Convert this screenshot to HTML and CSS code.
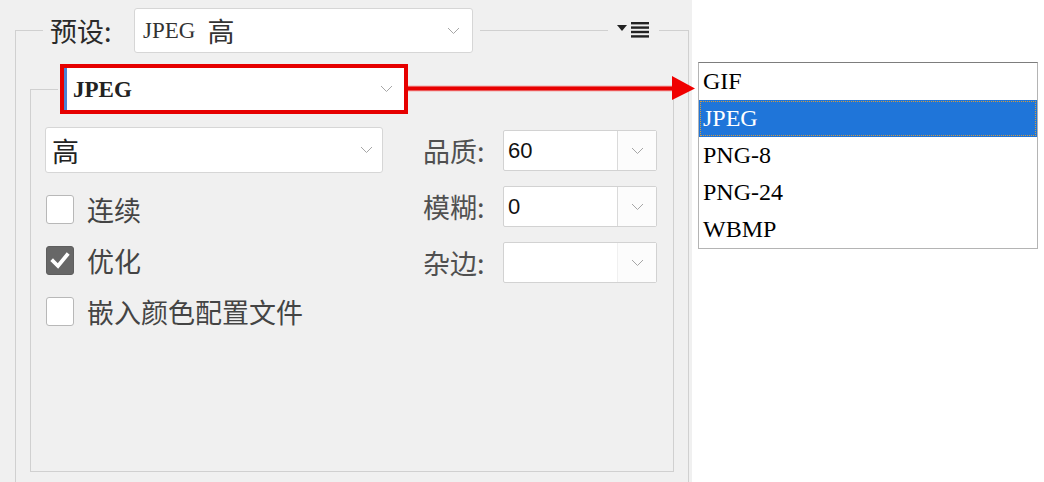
FILE: index.html
```html
<!DOCTYPE html>
<html lang="zh-CN">
<head>
<meta charset="utf-8">
<title>存储为 Web 所用格式</title>
<link rel="stylesheet" href="styles.css">
</head>
<body>
<div class="stage">
  <div class="panel">
    <fieldset class="group outer">
      <legend class="preset-legend">
        <span class="label preset-label">预设:</span>
        <div class="select preset-select">
          <span class="value"><span class="serif">JPEG</span> <span class="cjk">高</span></span>
          <svg class="chev" width="13" height="8" viewBox="0 0 13 8"><polyline points="1,1 6.5,6.5 12,1" fill="none" stroke="#a6a6a6" stroke-width="1"/></svg>
        </div>
        <span class="rule"></span>
        <svg class="menu-icon" width="32" height="16" viewBox="0 0 32 16">
          <polygon points="0,3 10,3 5,9" fill="#222"/>
          <rect x="14" y="0" width="18" height="2.4" fill="#222"/>
          <rect x="14" y="4.4" width="18" height="2.4" fill="#222"/>
          <rect x="14" y="8.8" width="18" height="2.4" fill="#222"/>
          <rect x="14" y="13.2" width="18" height="2.4" fill="#222"/>
        </svg>
      </legend>

      <fieldset class="group inner">
        <legend class="format-legend">
          <div class="select format-select">
            <span class="value serif bold">JPEG</span>
            <svg class="chev" width="13" height="8" viewBox="0 0 13 8"><polyline points="1,1 6.5,6.5 12,1" fill="none" stroke="#a6a6a6" stroke-width="1"/></svg>
          </div>
        </legend>

        <div class="cols">
          <div class="left">
            <div class="select quality-select">
              <span class="value cjk">高</span>
              <svg class="chev" width="13" height="8" viewBox="0 0 13 8"><polyline points="1,1 6.5,6.5 12,1" fill="none" stroke="#a6a6a6" stroke-width="1"/></svg>
            </div>
            <div class="check">
              <span class="box"></span>
              <span class="label">连续</span>
            </div>
            <div class="check">
              <span class="box checked">
                <svg width="28" height="29" viewBox="0 0 28 29"><polyline points="7,15 12,20 21,9" fill="none" stroke="#fff" stroke-width="3.8" stroke-linecap="square"/></svg>
              </span>
              <span class="label">优化</span>
            </div>
            <div class="check">
              <span class="box"></span>
              <span class="label">嵌入颜色配置文件</span>
            </div>
          </div>

          <div class="right">
            <div class="field">
              <span class="label field-label">品质:</span>
              <div class="combo">
                <span class="combo-value">60</span>
                <span class="combo-btn"><svg class="chev" width="13" height="8" viewBox="0 0 13 8"><polyline points="1,1 6.5,6.5 12,1" fill="none" stroke="#a6a6a6" stroke-width="1"/></svg></span>
              </div>
            </div>
            <div class="field">
              <span class="label field-label">模糊:</span>
              <div class="combo">
                <span class="combo-value">0</span>
                <span class="combo-btn"><svg class="chev" width="13" height="8" viewBox="0 0 13 8"><polyline points="1,1 6.5,6.5 12,1" fill="none" stroke="#a6a6a6" stroke-width="1"/></svg></span>
              </div>
            </div>
            <div class="field">
              <span class="label field-label">杂边:</span>
              <div class="combo">
                <span class="combo-value"></span>
                <span class="combo-btn faint"><svg class="chev" width="13" height="8" viewBox="0 0 13 8"><polyline points="1,1 6.5,6.5 12,1" fill="none" stroke="#a6a6a6" stroke-width="1"/></svg></span>
              </div>
            </div>
          </div>
        </div>
      </fieldset>
    </fieldset>
  </div>

  <svg class="arrow" width="288" height="26" viewBox="0 0 288 26">
    <line x1="0" y1="13.5" x2="268" y2="13.5" stroke="#f0b0b0" stroke-width="6"/>
    <line x1="0" y1="13.5" x2="268" y2="13.5" stroke="#e80000" stroke-width="4"/>
    <polygon points="264,1 287,13.5 264,25" fill="#f00000"/>
  </svg>

  <ul class="list">
    <li>GIF</li>
    <li class="sel">JPEG</li>
    <li>PNG-8</li>
    <li>PNG-24</li>
    <li>WBMP</li>
  </ul>
</div>
</body>
</html>
```

FILE: styles.css
```css
body {
  margin: 0;
  background: #fff;
  font-family: "Noto Sans CJK SC", sans-serif;
}

.stage {
  position: relative;
  width: 1044px;
  height: 482px;
  overflow: hidden;
  background: #fff;
}

.panel {
  width: 692px;
  height: 482px;
  box-sizing: border-box;
  padding-top: 8px;
  background: #f0f0f0;
  overflow: hidden;
}

.group {
  box-sizing: border-box;
  border: 1px solid #d0d0d0;
  min-width: 0;
  background: transparent;
}

.outer {
  margin: 0 0 0 15px;
  padding: 11px 0 0 0;
  width: 674px;
  height: 620px;
}

.inner {
  margin: 0 0 0 14px;
  padding: 13px 0 0 0;
  width: 644px;
  height: 408px;
}

.preset-legend {
  margin-left: 27px;
  padding: 0 10px 0 7px;
  width: 616px;
  box-sizing: border-box;
  display: flex;
  align-items: center;
}

.format-legend {
  margin-left: 27px;
  padding: 0 2px;
}

.label {
  font-family: "Noto Sans CJK SC", sans-serif;
  font-size: 27px;
  line-height: 1;
  color: #444;
  white-space: nowrap;
}

.preset-label {
  width: 84px;
  color: #2a2a2a;
}

.serif {
  font-family: "Liberation Serif", "Times New Roman", serif;
  font-size: 23px;
}

.bold {
  font-weight: 700;
  font-size: 23px;
}

.cjk {
  font-family: "Noto Sans CJK SC", sans-serif;
  font-size: 27px;
}

.select {
  box-sizing: border-box;
  display: flex;
  align-items: center;
  justify-content: space-between;
  background: #fff;
  border: 1px solid #d6d6d6;
  border-radius: 3px;
}

.select .value {
  line-height: 1;
  color: #333;
  white-space: nowrap;
}

.preset-select {
  width: 339px;
  height: 45px;
  padding: 0 12px 0 8px;
}

.preset-select .value {
  display: flex;
  align-items: center;
  gap: 12px;
}

.format-select {
  width: 348px;
  height: 50px;
  border: 4px solid #e60000;
  border-radius: 0;
  box-shadow: inset 3px 0 0 #4a82d4;
  padding: 0 11px 0 9px;
}

.format-select .value {
  color: #222;
}

.quality-select {
  width: 338px;
  height: 46px;
  padding: 0 9px 0 6px;
}

.quality-select .value {
  color: #222;
}

.rule {
  width: 128px;
  margin: 0 9px 0 7px;
  border-top: 1px solid #d0d0d0;
}

.menu-icon {
  display: block;
  margin-top: -2px;
}

.chev {
  display: block;
  flex: none;
}

.cols {
  display: flex;
  margin-left: 14px;
}

.left {
  width: 338px;
  display: flex;
  flex-direction: column;
  gap: 21px;
}

.check {
  display: flex;
  align-items: center;
  gap: 13px;
  height: 30px;
  padding-left: 1px;
}

.box {
  width: 28px;
  height: 29px;
  box-sizing: border-box;
  border: 1px solid #b8b8b8;
  border-radius: 3px;
  background: #fff;
  flex: none;
}

.box.checked {
  background: #676767;
  border-color: #5e5e5e;
}

.box.checked svg {
  display: block;
  margin: -1px;
}

.right {
  margin-left: 40px;
  padding-top: 3px;
  display: flex;
  flex-direction: column;
  gap: 15px;
}

.field {
  display: flex;
  align-items: center;
}

.field-label {
  width: 80px;
  color: #505050;
}

.combo {
  width: 154px;
  height: 41px;
  box-sizing: border-box;
  border: 1px solid #d2d2d2;
  border-radius: 2px;
  background: #fff;
  display: flex;
}

.combo-value {
  flex: 1;
  display: flex;
  align-items: center;
  padding-left: 4px;
  font-family: "Liberation Sans", Arial, sans-serif;
  font-size: 22px;
  color: #111;
}

.combo-btn {
  width: 38px;
  border-left: 1px solid #dadada;
  display: flex;
  align-items: center;
  justify-content: center;
  background: #fcfcfc;
}

.combo-btn.faint {
  border-left-color: #f0f0f0;
}

.arrow {
  position: absolute;
  left: 408px;
  top: 75px;
}

.list {
  position: absolute;
  left: 698px;
  top: 62px;
  width: 340px;
  box-sizing: border-box;
  margin: 0;
  padding: 0;
  list-style: none;
  background: #fff;
  border: 1px solid #b4b4b4;
  border-top-color: #7d7d7d;
  font-family: "Liberation Serif", "Times New Roman", serif;
  font-size: 24px;
  color: #000;
}

.list li {
  height: 37px;
  line-height: 37px;
  padding-left: 4px;
}

.list li.sel {
  background: #1f75d9;
  color: #fff;
  outline: 1px dotted #d49a3c;
  outline-offset: -2px;
}
```
